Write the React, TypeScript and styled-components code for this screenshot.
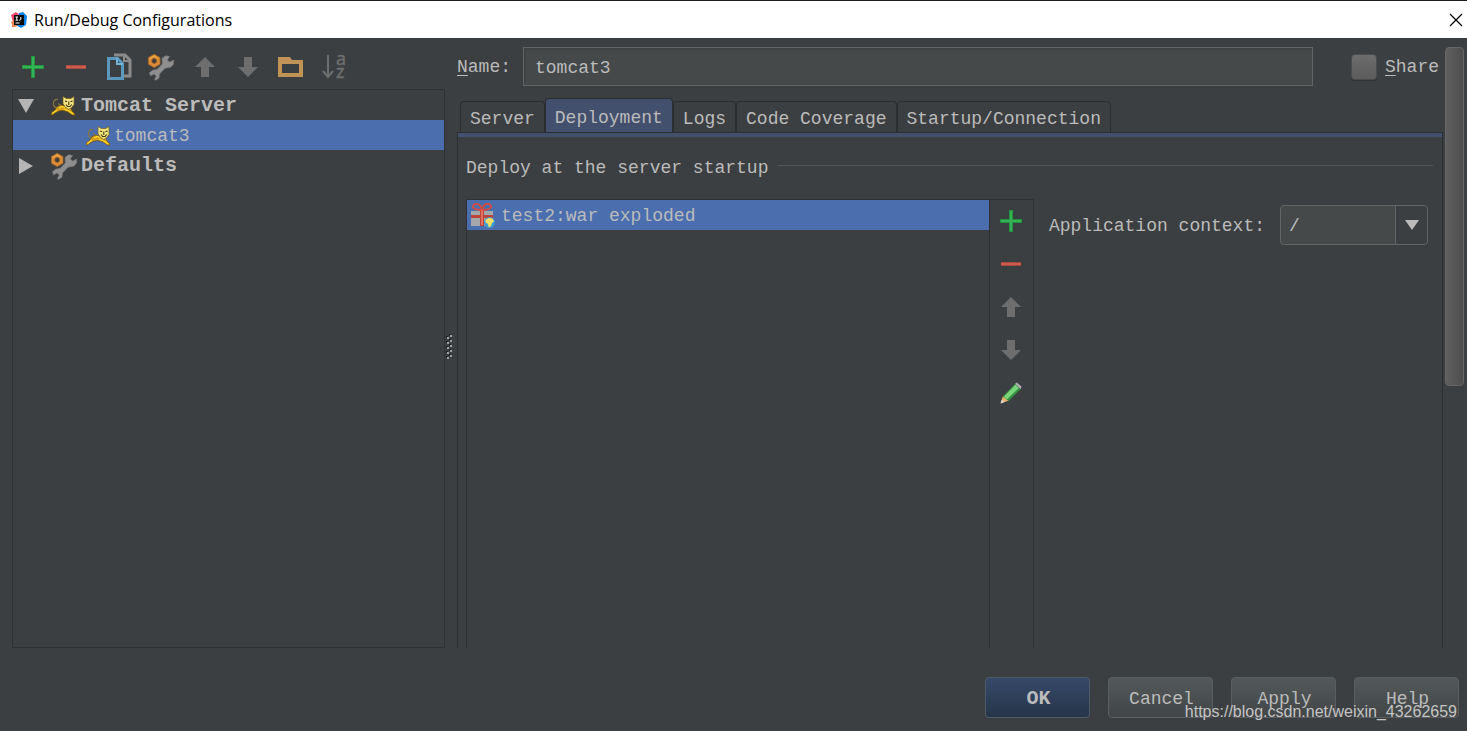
import React, { useState } from "react";
import styled, { createGlobalStyle, css } from "styled-components";

const mono = `"Liberation Mono", "Courier New", monospace`;
const line = "#2f3133";

const GlobalStyle = createGlobalStyle`
  *, *::before, *::after { box-sizing: border-box; }
  body { margin: 0; background: #3c3f41; }
  button, input, select { font: inherit; color: inherit; margin: 0; }
`;

const Dialog = styled.div`
  position: relative;
  display: flex;
  flex-direction: column;
  min-height: 100vh;
  background: #3c3f41;
  color: #bbbbbb;
  font: 18px/24px ${mono};
`;

const TitleBar = styled.header`
  display: flex;
  align-items: center;
  gap: 7px;
  height: 38px;
  padding: 0 4px 0 11px;
  border-top: 1px solid #1e1e1e;
  background: #ffffff;
  color: #000000;
`;

const Title = styled.h1`
  flex: 1;
  margin: 0;
  font: 400 16px/24px "Open Sans", "Noto Sans", sans-serif;
`;

const IconButton = styled.button`
  display: grid;
  place-items: center;
  flex: none;
  padding: 0;
  border: 0;
  background: none;
  svg { display: block; overflow: visible; }
`;

const Body = styled.main`
  display: flex;
  flex: 1;
  padding-left: 12px;
`;

const Sidebar = styled.aside`
  display: flex;
  flex-direction: column;
  flex: 0 0 433px;
`;

const Toolbar = styled.div<{ $vertical?: boolean }>`
  display: flex;
  ${IconButton} { width: 43px; height: 42px; }
  ${(p) =>
    p.$vertical
      ? css`
          flex-direction: column;
          flex: 0 0 45px;
          align-items: center;
          gap: 1px;
          border: solid ${line};
          border-width: 1px 1px 0;
        `
      : css`
          height: 51px;
          padding-top: 8px;
          ${IconButton} { padding-right: 2px; }
        `}
`;

const Tree = styled.ul`
  flex: 1;
  margin: 0;
  padding: 0;
  border: 1px solid ${line};
  list-style: none;
`;

const TreeRow = styled.li<{ $depth?: number; $selected?: boolean; $bold?: boolean }>`
  display: flex;
  align-items: center;
  height: 30px;
  padding-top: 2px;
  padding-left: ${(p) => (p.$depth ? 73 : 5)}px;
  background: ${(p) => (p.$selected ? "#4b6eaf" : "none")};
  ${(p) => p.$bold && css`font-size: 20px; font-weight: 700;`}
`;

const Twisty = styled.span`
  display: flex;
  width: 33px;
`;

const RowIcon = styled.span<{ $wide?: boolean }>`
  display: flex;
  width: ${(p) => (p.$wide ? 30 : 28)}px;
  flex: none;
`;

const Splitter = styled.div`
  display: flex;
  flex: 0 0 12px;
  align-items: center;
  padding-top: 8px;
`;

const Editor = styled.section`
  display: flex;
  flex-direction: column;
  flex: 1;
  min-width: 0;
  padding-top: 9px;
`;

const NameRow = styled.div`
  display: flex;
  align-items: center;
  height: 39px;
  padding-right: 4px;
`;

const NameLabel = styled.label`
  width: 66px;
`;

const Mnemonic = styled.span`
  text-decoration: underline;
  text-underline-offset: 3px;
  text-decoration-thickness: 1px;
`;

const TextField = styled.input`
  flex: 1;
  min-width: 0;
  height: 39px;
  padding: 2px 11px 0;
  border: 1px solid #646464;
  outline: 0;
  background: #45494a;
  box-shadow: inset 2px 2px 0 #3f4344;
`;

const ShareLabel = styled.label`
  display: flex;
  align-items: center;
  gap: 8px;
  margin-left: 38px;
`;

const CheckBox = styled.input`
  appearance: none;
  width: 26px;
  height: 26px;
  border: 1px solid #4a4c4e;
  border-radius: 4px;
  background: linear-gradient(#6c6c6c, #5c5c5c);
  box-shadow: 0 1px 0 #313335;
  &:checked { background: #4b6eaf; }
`;

const Tabs = styled.div`
  display: flex;
  align-items: flex-end;
  height: 46px;
  padding-left: 3px;
`;

const Tab = styled.button<{ $active: boolean }>`
  height: ${(p) => (p.$active ? 34 : 31)}px;
  padding: 4px 9px 0;
  border: 1px solid #2b2d2e;
  border-bottom: 0;
  border-radius: 4px 4px 0 0;
  background: ${(p) => (p.$active ? "#43506d" : "#3c3f41")};
  white-space: nowrap;
`;

const TabPanel = styled.div`
  display: flex;
  flex-direction: column;
  flex: 1;
  padding: 0 8px;
  border: solid #2b2d2e;
  border-width: 1px 1px 0;
  box-shadow: inset 0 4px 0 #43506d;
`;

const SectionTitle = styled.h2`
  display: flex;
  align-items: flex-start;
  gap: 10px;
  height: 24px;
  margin: 23px 1px 19px 0;
  font: inherit;
  &::after {
    content: "";
    flex: 1;
    height: 1px;
    margin-top: 9px;
    background: #515658;
  }
`;

const Deployment = styled.div`
  display: flex;
  flex: 1;
`;

const ArtifactList = styled.ul`
  flex: 1;
  min-width: 0;
  margin: 0;
  padding: 0;
  border: solid ${line};
  border-width: 1px 0 0 1px;
  list-style: none;
`;

const Artifact = styled.li`
  display: flex;
  align-items: center;
  gap: 6px;
  height: 30px;
  padding: 2px 4px 0;
  background: #4b6eaf;
  white-space: nowrap;
`;

const ContextForm = styled.div`
  display: flex;
  align-items: center;
  align-self: flex-start;
  gap: 15px;
  padding: 6px 6px 0 15px;
  white-space: nowrap;
`;

const ContextLabel = styled.label`
  padding-top: 2px;
`;

const Combo = styled.div`
  position: relative;
  width: 148px;
  height: 40px;
`;

const ComboSelect = styled.select`
  appearance: none;
  width: 100%;
  height: 100%;
  padding: 2px 40px 0 8px;
  border: 1px solid #646464;
  border-radius: 4px;
  outline: 0;
  background: #45494a;
`;

const ComboArrow = styled.span`
  position: absolute;
  inset: 1px 1px 1px auto;
  display: grid;
  place-items: center;
  width: 32px;
  border-left: 1px solid #646464;
  border-radius: 0 3px 3px 0;
  background: #3c3f41;
  pointer-events: none;
`;

const ScrollTrack = styled.div`
  flex: 0 0 24px;
  padding: 9px 3px 0 2px;
`;

const ScrollThumb = styled.div`
  height: 339px;
  border: 1px solid #666666;
  border-radius: 4px;
  background: linear-gradient(90deg, #5f5f5f, #4e4e4e);
`;

const Footer = styled.footer`
  display: flex;
  justify-content: flex-end;
  gap: 18px;
  padding: 29px 8px 13px;
`;

const ActionButton = styled.button<{ $primary?: boolean }>`
  width: 105px;
  height: 41px;
  padding: 2px 0 0 2px;
  border: 1px solid #5a5e60;
  border-radius: 4px;
  background: linear-gradient(#53585a, #424647);
  ${(p) =>
    p.$primary &&
    css`
      border-color: #4f5a69;
      background: linear-gradient(#36496a, #263549);
      font-size: 20px;
      font-weight: 700;
    `}
`;

const Watermark = styled.span`
  position: absolute;
  right: 10px;
  bottom: 8px;
  color: #c4c4c4;
  font: 16px/22px "Liberation Sans", Arial, sans-serif;
  pointer-events: none;
`;

const AppLogo = () => (
  <svg width="16" height="16" viewBox="0 0 16 16" aria-hidden="true">
    <path d="M0 3 5 0l4 3-3 11-5 1 1-5z" fill="#f8466f" />
    <path d="M0 10 5 7l3 7-6 1z" fill="#f58a4d" />
    <path d="M8 1l4-1 4 4-1 9-5 3-5-3z" fill="#0b82ec" />
    <path d="M3 3h10v10H3z" fill="#0a0a0a" />
    <path d="M4.500 5h2.500M5.800 5v3M4.500 8.200h2.500M9.800 5v2.300q0 1-1.600.9M4.500 11h4" stroke="#fff" strokeWidth="1" fill="none" />
  </svg>
);

const CloseIcon = () => (
  <svg width="14" height="14" viewBox="0 0 14 14" aria-hidden="true">
    <path d="M1 1l12 12M13 1 1 13" stroke="#000" strokeWidth="1.200" />
  </svg>
);

const PlusIcon = () => (
  <svg width="22" height="22" viewBox="0 0 22 22" aria-hidden="true">
    <path d="M9 0h4v9h9v4h-9v9H9v-9H0V9h9z" fill="#24933e" />
    <path d="M10 1h2v9h9v2h-9v9h-2v-9H1v-2h9z" fill="#35b457" />
  </svg>
);

const MinusIcon = () => (
  <svg width="22" height="22" viewBox="0 0 22 22" aria-hidden="true">
    <path d="M1 9h20v4H1z" fill="#a94840" />
    <path d="M1 10h20v2H1z" fill="#cc5b50" />
  </svg>
);

const CopyIcon = () => (
  <svg width="26" height="28" viewBox="0 0 26 28" aria-hidden="true">
    <path d="M8 2h11l5 5v16h-6" fill="none" stroke="#8b8b8b" strokeWidth="3" />
    <path d="M18 1v7h7" fill="none" stroke="#8b8b8b" strokeWidth="2" />
    <path d="M2.500 5.500h9l5 5v15h-14z" fill="#3c3f41" stroke="#5a99bd" strokeWidth="3" />
    <path d="M11 5v6h6" fill="none" stroke="#76b4d3" strokeWidth="2" />
  </svg>
);

const WrenchIcon = () => (
  <svg width="27" height="27" viewBox="0 0 27 27" aria-hidden="true">
    <path
      d="M14 4.300 17.700 1.700l4 .8L19.300 6l2.400 2 4-2v4l-3 3.300-5.700 1-5.500 5.700-.5 4.300L7.700 26.200l-1.400-.4 2-3.800L6 20l-3.300 2-1.400-3.300L5 16l4.300-.7 5-5.300z"
      fill="#8f8f8f"
      stroke="#747474"
      strokeWidth=".6"
    />
    <path d="M6.200.3 12 3.600v6.600l-5.800 3.400L.4 10.200V3.600z" fill="#d98d37" stroke="#a96826" strokeWidth=".7" />
    <circle cx="6.200" cy="7" r="2.400" fill="#3c3f41" stroke="#8f5723" strokeWidth=".8" />
    <path d="M2 4.500 6.200 2l3 1.800" fill="none" stroke="#f1b04f" />
  </svg>
);

const ArrowIcon = ({ down }: { down?: boolean }) => (
  <svg width="20" height="20" viewBox="0 0 20 20" aria-hidden="true">
    <path d={down ? "M6 0h8v10h6L10 20 0 10h6z" : "M10 0l10 10h-6v10H6V10H0z"} fill="#6e6e6e" />
  </svg>
);

const FolderIcon = () => (
  <svg width="25" height="22" viewBox="0 0 25 22" aria-hidden="true">
    <path d="M0 1h12l2 3h11v17H0zM4 8v9h17V8z" fillRule="evenodd" fill="#c29357" />
  </svg>
);

const SortIcon = () => (
  <svg width="24" height="28" viewBox="0 0 24 28" aria-hidden="true">
    <path d="M6 2v22M1 18l5 6 5-6" fill="none" stroke="#6e6e6e" strokeWidth="2" />
    <g fill="#6e6e6e" stroke="#6e6e6e" strokeWidth=".5" fontFamily="Open Sans, sans-serif" fontSize="18">
      <text x="14" y="12">a</text>
      <text x="14" y="25">z</text>
    </g>
  </svg>
);

const TriangleIcon = ({ open }: { open?: boolean }) => (
  <svg width="16" height="16" viewBox="0 0 16 16" aria-hidden="true">
    <path d={open ? "M0 1h16L8 15z" : "M1 0v16l14-8z"} fill="#b5b5b5" />
  </svg>
);

const CatIcon = () => (
  <svg width="24" height="20" viewBox="0 0 24 20" aria-hidden="true">
    <path d="M6 12Q2 11 2.500 7T7 3.500M7 7.500l3 2" fill="none" stroke="#897642" strokeWidth="1.200" />
    <path d="M0 19l.5-2.500L4 14l2-3.500 4-1.500 4 1 6 2.500 1 2.500 3 3-.5 1.500-3-1-3.500-2.500-5-1.500-4 .5L4 17l-2.500 2z" fill="#d6a015" stroke="#614817" strokeWidth=".6" />
    <path d="M1.500 17.500 6 14M8 12l3-1.500 3 1M13 13l5 2 4 3" fill="none" stroke="#ffd82f" strokeWidth="1.300" />
    <path d="M12 .5l3.300 2h4.500L23 .5v8l-2.300 3-3 2L14 11l-2-3.500z" fill="#f0e47e" stroke="#745a19" strokeWidth=".7" />
    <path d="M14 5l2 .8M19.500 5.800l2-.8M17.800 5.500v3.500M15 8.500l1.500 2h2.500l1.800-2" fill="none" stroke="#403413" strokeWidth="1.100" />
  </svg>
);

const GiftIcon = () => (
  <svg width="24" height="26" viewBox="0 0 24 26" aria-hidden="true">
    <path d="M0 8h22v5H0zM0 15h22v8H0z" fill="#a5a8ab" />
    <path d="M0 12h22v3H0zM9 7h4v16H9z" fill="#bd4439" />
    <path d="M11 7v15" stroke="#ef8171" strokeWidth="1.500" />
    <path d="M10 7Q2 6.500 1.800 3.500 3 0 7 1.200 10 2.500 11 7 12 2.500 15 1.200 19 0 20.200 3.500 20 6.500 12 7" fill="none" stroke="#d44c41" strokeWidth="1.900" />
    <circle cx="18.500" cy="19.500" r="5.500" fill="#3b9ad1" />
    <path d="M14.500 17l3-2 4 .5 1.500 3-2 1.500-1 3-2 1.500-1.500-4-2-1z" fill="#ffe169" />
  </svg>
);

const PencilIcon = () => (
  <svg width="22" height="22" viewBox="0 0 22 22" aria-hidden="true">
    <path d="M.5 21.500 3 14l6 4.500z" fill="#e7b16b" />
    <path d="M.5 21.500 1.800 17.800l3 2z" fill="#d9d9d9" />
    <path d="M2.800 14.500 15 1.800l5.500 5.400L8.500 19z" fill="#35903f" />
    <path d="M3.800 14.800 15.500 2.800l3.300 3.300L6.800 17.500z" fill="#7ad47a" />
    <path d="M15 1.800 17 .5l4.500 4-1 2.700z" fill="#a9adb0" />
  </svg>
);

const GripIcon = () => (
  <svg width="8" height="28" viewBox="0 0 8 28" aria-hidden="true">
    {[0, 5, 10, 15, 20].map((y) => (
      <g key={y}>
        <path d={`M1 ${y + 3}h2v2H1zM4 ${y + 1}h2v2H4z`} fill="#202122" />
        <path d={`M2 ${y + 4}h2v2H2zM5 ${y + 2}h2v2H5z`} fill="#a0a0a0" />
      </g>
    ))}
  </svg>
);

const treeActions: [string, React.ReactNode][] = [
  ["Add", <PlusIcon />],
  ["Remove", <MinusIcon />],
  ["Copy", <CopyIcon />],
  ["Edit defaults", <WrenchIcon />],
  ["Move up", <ArrowIcon />],
  ["Move down", <ArrowIcon down />],
  ["New folder", <FolderIcon />],
  ["Sort", <SortIcon />],
];

const artifactActions: [string, React.ReactNode][] = [
  ["Add artifact", <PlusIcon />],
  ["Remove artifact", <MinusIcon />],
  ["Move artifact up", <ArrowIcon />],
  ["Move artifact down", <ArrowIcon down />],
  ["Edit artifact", <PencilIcon />],
];

const tabNames = ["Server", "Deployment", "Logs", "Code Coverage", "Startup/Connection"];

const ActionBar = ({ items, vertical }: { items: [string, React.ReactNode][]; vertical?: boolean }) => (
  <Toolbar $vertical={vertical} role="toolbar">
    {items.map(([label, icon]) => (
      <IconButton key={label} type="button" aria-label={label}>
        {icon}
      </IconButton>
    ))}
  </Toolbar>
);

export default function App() {
  const [tab, setTab] = useState("Deployment");
  const [name, setName] = useState("tomcat3");

  return (
    <Dialog>
      <GlobalStyle />
      <TitleBar>
        <AppLogo />
        <Title>Run/Debug Configurations</Title>
        <IconButton type="button" aria-label="Close">
          <CloseIcon />
        </IconButton>
      </TitleBar>
      <Body>
        <Sidebar>
          <ActionBar items={treeActions} />
          <Tree role="tree">
            <TreeRow role="treeitem" aria-expanded="true" $bold>
              <Twisty><TriangleIcon open /></Twisty>
              <RowIcon $wide><CatIcon /></RowIcon>
              Tomcat Server
            </TreeRow>
            <TreeRow role="treeitem" aria-selected="true" $depth={1} $selected>
              <RowIcon><CatIcon /></RowIcon>
              tomcat3
            </TreeRow>
            <TreeRow role="treeitem" aria-expanded="false" $bold>
              <Twisty><TriangleIcon /></Twisty>
              <RowIcon $wide><WrenchIcon /></RowIcon>
              Defaults
            </TreeRow>
          </Tree>
        </Sidebar>
        <Splitter><GripIcon /></Splitter>
        <Editor>
          <NameRow>
            <NameLabel htmlFor="config-name"><Mnemonic>N</Mnemonic>ame:</NameLabel>
            <TextField id="config-name" value={name} onChange={(e) => setName(e.target.value)} />
            <ShareLabel>
              <CheckBox type="checkbox" />
              <span><Mnemonic>S</Mnemonic>hare</span>
            </ShareLabel>
          </NameRow>
          <Tabs role="tablist">
            {tabNames.map((t) => (
              <Tab key={t} type="button" role="tab" aria-selected={t === tab} $active={t === tab} onClick={() => setTab(t)}>
                {t}
              </Tab>
            ))}
          </Tabs>
          <TabPanel role="tabpanel">
            <SectionTitle>Deploy at the server startup</SectionTitle>
            <Deployment>
              <ArtifactList>
                <Artifact>
                  <GiftIcon />
                  test2:war exploded
                </Artifact>
              </ArtifactList>
              <ActionBar items={artifactActions} vertical />
              <ContextForm>
                <ContextLabel htmlFor="app-context">Application context:</ContextLabel>
                <Combo>
                  <ComboSelect id="app-context" defaultValue="/">
                    <option>/</option>
                  </ComboSelect>
                  <ComboArrow>
                    <svg width="14" height="12" viewBox="0 0 14 12" aria-hidden="true">
                      <path d="M0 1h14L7 11z" fill="#bbbbbb" />
                    </svg>
                  </ComboArrow>
                </Combo>
              </ContextForm>
            </Deployment>
          </TabPanel>
        </Editor>
        <ScrollTrack><ScrollThumb /></ScrollTrack>
      </Body>
      <Footer>
        <ActionButton type="button" $primary>OK</ActionButton>
        <ActionButton type="button">Cancel</ActionButton>
        <ActionButton type="button">Apply</ActionButton>
        <ActionButton type="button">Help</ActionButton>
      </Footer>
      <Watermark>https://blog.csdn.net/weixin_43262659</Watermark>
    </Dialog>
  );
}
